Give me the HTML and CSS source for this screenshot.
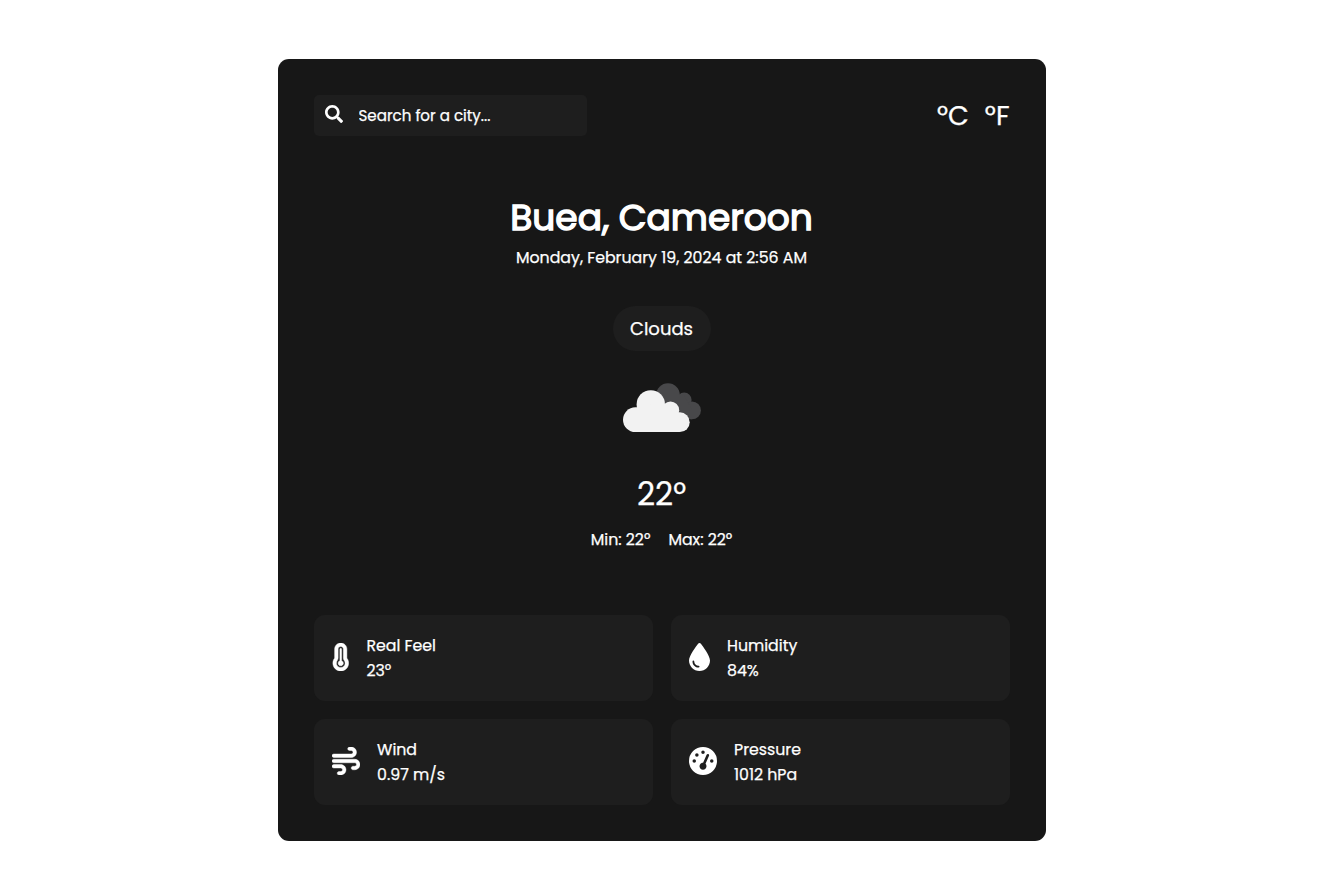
FILE: index.html
```html
<!DOCTYPE html>
<html lang="en">
<head>
<meta charset="utf-8">
<title>Weather</title>
<link rel="stylesheet" href="styles.css">
</head>
<body>
<main class="card">
  <header class="topbar">
    <label class="search">
      <svg class="search-icon" viewBox="0 0 512 512"><path d="M505 442.7L405.3 343c-4.5-4.5-10.6-7-17-7H372c27.6-35.3 44-79.7 44-128C416 93.1 322.9 0 208 0S0 93.1 0 208s93.1 208 208 208c48.3 0 92.7-16.4 128-44v16.3c0 6.4 2.5 12.5 7 17l99.7 99.7c9.4 9.4 24.6 9.4 33.9 0l28.3-28.3c9.4-9.4 9.4-24.6.1-34zM208 340c-73 0-132-59-132-132 0-73 59-132 132-132 73 0 132 59 132 132 0 73-59 132-132 132z"/></svg>
      <input class="search-input" type="text" placeholder="Search for a city...">
    </label>
    <div class="units"><span class="unit">°C</span><span class="unit unit-f">°F</span></div>
  </header>
  <section class="now">
    <h1 class="city">Buea, Cameroon</h1>
    <p class="date">Monday, February 19, 2024 at 2:56 AM</p>
    <div class="condition"><span class="condition-text">Clouds</span></div>
    <svg class="cloud" viewBox="0 0 78 50">
      <g fill="#48484a"><circle cx="45" cy="12" r="11.8"/><circle cx="61.2" cy="17" r="7.4"/><circle cx="69" cy="27.4" r="8.9"/><path d="M45 12h16l8 15v9.3H45z"/></g>
      <g fill="#f2f2f2"><circle cx="12.4" cy="36.7" r="12.4"/><circle cx="27.8" cy="21.4" r="14.2"/><circle cx="47.5" cy="27.2" r="8.7"/><circle cx="56.8" cy="39.2" r="9.9"/><path d="M12.4 25l15-4 20 6 9.4 3v19.1H12.4z"/></g>
    </svg>
    <p class="temp">22°</p>
    <p class="range"><span class="min">Min: 22°</span><span class="max">Max: 22°</span></p>
  </section>
  <section class="tiles">
    <div class="tile">
      <svg class="icon icon-thermo" viewBox="0 0 320 512"><path d="M160 64c-26.5 0-48 21.5-48 48V276.5c0 17.3-7.1 31.9-15.3 42.5C86.2 332.6 80 349.5 80 368c0 44.2 35.8 80 80 80s80-35.8 80-80c0-18.5-6.2-35.4-16.7-48.9c-8.2-10.6-15.3-25.2-15.3-42.5V112c0-26.5-21.5-48-48-48zM48 112C48 50.2 98.1 0 160 0s112 50.1 112 112V276.5c0 .1 .1 .3 .2 .6c.2 .6 .8 1.6 1.7 2.8c18.9 24.4 30.1 55 30.1 88.1c0 79.5-64.5 144-144 144S16 447.5 16 368c0-33.2 11.2-63.8 30.1-88.1c.9-1.2 1.5-2.2 1.7-2.8c.1-.3 .2-.5 .2-.6V112zM208 368c0 26.5-21.5 48-48 48s-48-21.5-48-48c0-20.9 13.4-38.7 32-45.3V112c0-8.8 7.2-16 16-16s16 7.2 16 16v210.7c18.6 6.6 32 24.4 32 45.3z"/></svg>
      <div class="info"><p class="feel">Real Feel</p><p class="feel-value">23°</p></div>
    </div>
    <div class="tile">
      <svg class="icon icon-drop" viewBox="0 0 384 512"><path d="M192 512C86 512 0 426 0 320C0 228.8 130.2 57.7 166.6 11.7C172.6 4.2 181.5 0 191.1 0h1.8c9.6 0 18.5 4.2 24.5 11.7C253.8 57.7 384 228.8 384 320c0 106-86 192-192 192zM96 336c0-8.8-7.2-16-16-16s-16 7.2-16 16c0 61.9 50.1 112 112 112c8.8 0 16-7.2 16-16s-7.2-16-16-16c-44.2 0-80-35.8-80-80z"/></svg>
      <div class="info"><p class="humidity">Humidity</p><p class="humidity-value">84%</p></div>
    </div>
    <div class="tile">
      <svg class="icon icon-wind" viewBox="0 0 512 512"><path d="M288 32c0 17.7 14.3 32 32 32h32c17.7 0 32 14.3 32 32s-14.3 32-32 32H32c-17.7 0-32 14.3-32 32s14.3 32 32 32H352c53 0 96-43 96-96s-43-96-96-96H320c-17.7 0-32 14.3-32 32zm64 352c0 17.7 14.3 32 32 32h32c53 0 96-43 96-96s-43-96-96-96H32c-17.7 0-32 14.3-32 32s14.3 32 32 32H416c17.7 0 32 14.3 32 32s-14.3 32-32 32H384c-17.7 0-32 14.3-32 32zM128 512h32c53 0 96-43 96-96s-43-96-96-96H32c-17.7 0-32 14.3-32 32s14.3 32 32 32H160c17.7 0 32 14.3 32 32s-14.3 32-32 32H128c-17.7 0-32 14.3-32 32s14.3 32 32 32z"/></svg>
      <div class="info"><p class="wind">Wind</p><p class="wind-value">0.97 m/s</p></div>
    </div>
    <div class="tile">
      <svg class="icon" viewBox="0 0 512 512"><path d="M0 256a256 256 0 1 1 512 0A256 256 0 1 1 0 256zM288 96a32 32 0 1 0 -64 0 32 32 0 1 0 64 0zM256 416c35.3 0 64-28.7 64-64c0-17.4-6.9-33.1-18.1-44.6L366 161.7c5.3-12.1-.2-26.3-12.3-31.6s-26.3 .2-31.6 12.3L257.9 288c-.6 0-1.3 0-1.9 0c-35.3 0-64 28.7-64 64s28.7 64 64 64zM176 144a32 32 0 1 0 -64 0 32 32 0 1 0 64 0zM96 288a32 32 0 1 0 0-64 32 32 0 1 0 0 64zm352-32a32 32 0 1 0 -64 0 32 32 0 1 0 64 0z"/></svg>
      <div class="info"><p class="pressure">Pressure</p><p class="pressure-value">1012 hPa</p></div>
    </div>
  </section>
</main>
</body>
</html>
```
FILE: styles.css
```css
* { box-sizing: border-box; margin: 0; padding: 0; }
body {
  background: #fff;
  color: #fff;
  font-family: Poppins, Inter, sans-serif;
  font-size: 15.78px;
  -webkit-text-stroke: 0.25px #fff;
  padding: 59px 0 49px 277.5px;
}
.card { width: 768px; height: 782px; padding: 36px; background: #171717; border-radius: 11px; }
.topbar { display: flex; justify-content: space-between; height: 41px; }
.search { display: flex; width: 273px; height: 41px; padding-left: 11px; background: #1e1e1e; border-radius: 5px; }
.search-icon { width: 18px; height: 18px; margin-top: 10px; fill: #fff; flex: none; }
.search-input {
  width: 220px; height: 41px; margin-left: 16px;
  border: 0; outline: 0; background: transparent; color: #fff;
  font: inherit; font-size: 15.1px;
}
.search-input::placeholder { color: #fff; opacity: 1; }
.units { display: flex; gap: 16px; font-size: 27px; line-height: 41px; }
.now { display: flex; flex-direction: column; align-items: center; text-align: center; }
.city { margin-top: 54px; font-size: 36px; font-weight: 400; line-height: 55px; white-space: nowrap; -webkit-text-stroke: 1.4px #fff; }
.date { margin-top: 1px; line-height: 24px; }
.condition { display: flex; justify-content: center; width: 98px; height: 45px; margin-top: 36px; border-radius: 23px; background: #1e1e1e; font-size: 18px; line-height: 45px; }
.cloud { width: 78px; height: 50px; margin-top: 32px; }
.temp { margin-top: 36px; font-size: 31.5px; line-height: 50px; }
.range { display: flex; gap: 18px; margin-top: 9px; font-size: 15.75px; line-height: 24px; }
.tiles { display: grid; grid-template-columns: 1fr 1fr; gap: 18px; margin-top: 63px; }
.tile { display: flex; align-items: center; gap: 17.5px; height: 86px; padding: 18px; background: #1e1e1e; border-radius: 11px; }
.icon { width: 28px; height: 28px; margin-bottom: 2px; fill: #fff; fill-rule: evenodd; flex: none; }
.icon-thermo { width: 17.5px; stroke: #fff; stroke-width: 8px; }
.icon-drop { width: 21px; }
.icon-wind { stroke: #fff; stroke-width: 8px; }
.info { line-height: 25px; white-space: nowrap; }
```
